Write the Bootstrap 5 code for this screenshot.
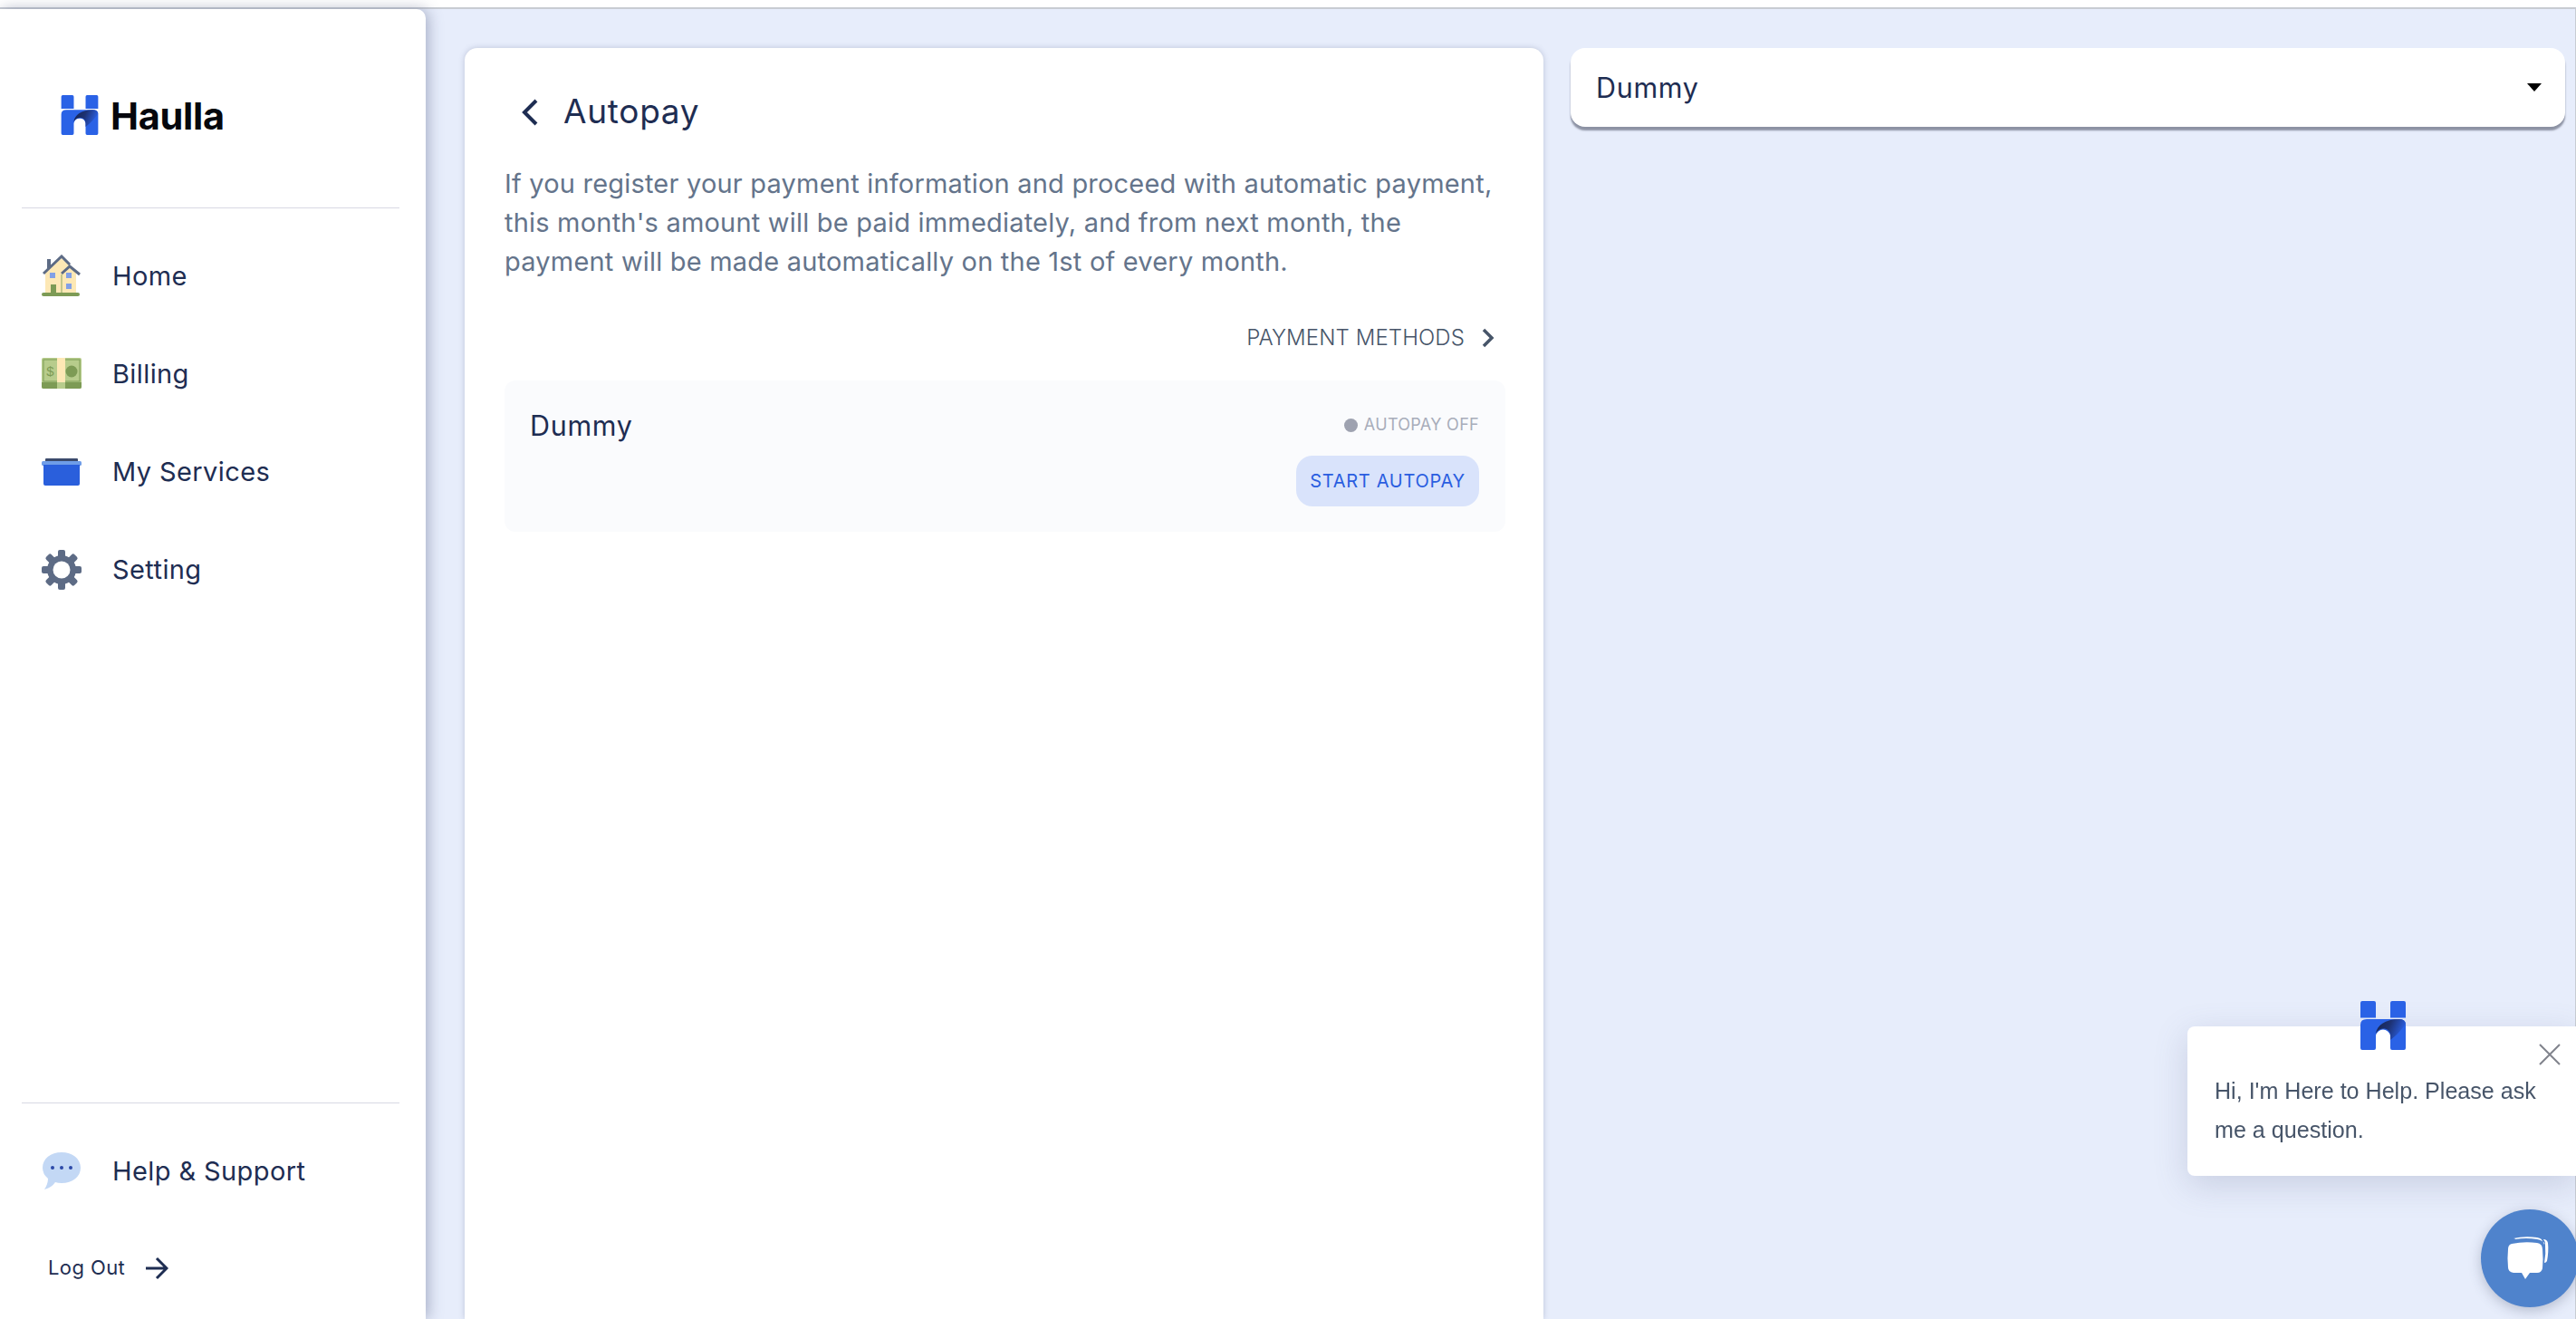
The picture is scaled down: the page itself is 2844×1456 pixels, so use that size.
<!DOCTYPE html>
<html lang="en">
<head>
<meta charset="utf-8">
<title>Haulla Autopay</title>
<link rel="stylesheet" href="https://cdn.jsdelivr.net/npm/bootstrap@5.3.0/dist/css/bootstrap.min.css">
<style>
html,body{height:100%;}
body{font-family:"Inter","Liberation Sans",sans-serif;background:#e7edfb;overflow:hidden;color:#1e2d52;}
.top-strip{height:10px;background:#fff;border-bottom:2px solid #c8ccd3;}
.app-shell{height:1446px;}
.side-pane{width:470px;background:#fff;border-top-right-radius:10px;box-shadow:3px 0 16px rgba(90,100,135,.45);padding:0 29px 0 24px;flex:none;z-index:2;}
.brand-row{height:220px;padding:95px 0 0 43px;border-bottom:1px solid #d8d9e4;flex:none;}
.brand-word{font-family:"Inter","Liberation Sans",sans-serif;font-weight:700;font-size:41.5px;line-height:46px;color:#05070d;letter-spacing:-.3px;margin-left:13px;}
.menu-list{padding-top:21px;}
.menu-item{height:108px;padding:0 0 0 22px;color:#1e2d52;font-size:29px;font-family:"Inter","Liberation Sans",sans-serif;font-weight:400;letter-spacing:.4px;gap:32px;}
.menu-item:hover,.menu-item:focus{color:#1e2d52;}
.icon-box{width:46px;flex:none;}
.side-foot{border-top:1px solid #d8d9e4;height:239px;flex:none;}
.help-item{margin-top:21px;}
.logout-item{padding:36px 0 0 29px;color:#1e2d52;font-size:22px;font-family:"Inter","Liberation Sans",sans-serif;letter-spacing:.4px;gap:22px;}
.content-area{padding:43px 11px 0 43px;gap:30px;border-right:1px solid #c8ccd3;}
.pay-card{width:1191px;flex:none;background:#fff;border:0;border-radius:14px 14px 0 0;box-shadow:0 0 6px rgba(90,100,135,.3);padding:43px 42px 0 44px;}
.title-row{height:56px;gap:27px;padding-left:18px;margin-bottom:29px;}
.page-title{font-family:"Inter","Liberation Sans",sans-serif;font-size:37px;letter-spacing:.7px;font-weight:400;color:#1e2d52;margin:0 0 3px;line-height:50px;}
.lead-text{font-size:29px;line-height:43px;color:#64748b;margin:0;letter-spacing:.2px;padding-right:2px;}
.methods-row{height:40px;margin-top:43px;padding-right:12px;gap:19px;color:#475569;font-size:24px;font-family:"Inter","Liberation Sans",sans-serif;font-weight:300;letter-spacing:.1px;}
.methods-row:hover{color:#475569;}
.account-box{margin-top:27px;height:167px;background:#fafbfd;border-radius:12px;padding:27px 29px 0 28px;}
.account-name{font-family:"Inter","Liberation Sans",sans-serif;font-weight:400;font-size:30.5px;line-height:46px;letter-spacing:.7px;color:#1e2d52;}
.status-off{font-size:18px;color:#a8adba;line-height:44px;height:44px;gap:7px;letter-spacing:.3px;}
.status-dot{width:15px;height:15px;border-radius:50%;background:#9ea2b0;}
.autopay-btn{width:202px;height:56px;margin-top:12px;padding:0;background:#d9e3fb;color:#2a5ee0;border:0;border-radius:18px;font-size:20px;letter-spacing:.7px;}
.autopay-btn:hover{background:#d9e3fb;color:#2a5ee0;}
.select-col{flex:1 1 auto;min-width:0;}
.picker-btn{width:100%;height:87px;background:#fff;border:0;border-radius:16px;box-shadow:0 4px 2px rgba(80,85,105,.6);padding:0 26px 0 28px;color:#1e2d52;font-family:"Inter","Liberation Sans",sans-serif;font-weight:400;font-size:30.5px;letter-spacing:.7px;}
.picker-btn:hover,.picker-btn:focus,.picker-btn:active{background:#fff!important;color:#1e2d52!important;}
.picker-btn::after{color:#000;border-top-width:9px;border-left-width:8px;border-right-width:8px;margin:0;}
.help-popup{position:fixed;left:2415px;top:1133px;width:429px;height:165px;background:#fff;border-radius:8px 0 0 8px;box-shadow:0 10px 36px rgba(90,100,140,.22);padding:50px 20px 0 30px;font-family:"Liberation Sans",sans-serif;font-size:25.1px;line-height:43px;color:#475569;z-index:5;}
.popup-logo{position:absolute;left:191px;top:-28px;}
.popup-close{position:absolute;left:388px;top:19px;line-height:0;}
.chat-fab{position:fixed;left:2739px;top:1335px;width:108px;height:108px;border-radius:50%;background:#4f83cc;box-shadow:0 4px 14px rgba(70,80,110,.3);z-index:5;border:0;padding:0;}
.chat-fab svg{position:absolute;left:26px;top:26px;}
</style>
</head>
<body>
<svg width="0" height="0" class="position-absolute">
  <defs>
    <linearGradient id="sw" x1="0" y1="0" x2="1" y2=".3">
      <stop offset="0" stop-color="#17224a"/><stop offset=".5" stop-color="#1d3273"/><stop offset="1" stop-color="#2a5ee0"/>
    </linearGradient>
    <symbol id="hmark" viewBox="0 0 50 54">
      <path fill="#2a62e6" d="M2 0H15Q17 0 17 2V18.500H0V2Q0 0 2 0ZM35 0H48Q50 0 50 2V18.500H33V2Q33 0 35 0Z"/>
      <path fill="#2a62e6" d="M0 26Q0 20 7 20H43Q50 20 50 26V52Q50 54 48 54H35Q33 54 33 52V38A8.200 8.200 0 0 0 17 38V52Q17 54 15 54H2Q0 54 0 52Z"/>
      <path fill="url(#sw)" d="M17 36C18 27 27 20 43 20Q49 20 50 25C47 30 40 38 33 43V38C33 29 21 28 17 36Z"/>
    </symbol>
  </defs>
</svg>
<div class="top-strip"></div>
<div class="app-shell d-flex">
  <aside class="side-pane d-flex flex-column">
    <div class="brand-row d-flex align-items-start">
      <svg width="42" height="44"><use href="#hmark"/></svg>
      <span class="brand-word">Haulla</span>
    </div>
    <nav class="menu-list nav flex-column flex-grow-1">
      <a class="menu-item nav-link d-flex align-items-center" href="#">
        <span class="icon-box d-flex">
          <svg width="44" height="48" viewBox="0 0 44 48"><path fill="#5d6b85" d="M6 5h4v10H6z"/><path fill="#fde8b5" d="M4 20 22 4l16 14v27H4z"/><path fill="none" stroke="#5d6b85" stroke-width="3" d="M2 21 22 2 31 11M22 21l9-8 11 9"/><path fill="none" stroke="#8aa663" stroke-width="1" d="M22 22v21"/><path fill="#82a0e6" d="M9 20h6v6H9zM27 20h6v6h-6zM27 32h6v6h-6z"/><path fill="#7d9b55" d="M10 33h6v10h-6z"/><rect x="0" y="42" width="42" height="4" rx="2" fill="#7d9b55"/></svg>
        </span>
        <span>Home</span>
      </a>
      <a class="menu-item nav-link d-flex align-items-center" href="#">
        <span class="icon-box d-flex">
          <svg width="44" height="36" viewBox="0 0 44 36"><rect width="44" height="34" rx="2" fill="#b7cc8c"/><path fill="#7d9b55" d="M0 27h44v5q0 2-2 2H2q-2 0-2-2z"/><rect x="2" y="2" width="40" height="24" fill="none" stroke="#7d9b55" stroke-width="1"/><rect x="17" width="9" height="27" fill="#fde8b5"/><rect x="17" y="27" width="9" height="7" fill="#b7cc8c"/><circle cx="33" cy="15" r="6.500" fill="#7d9b55"/><text x="9.500" y="20" font-size="15" font-family="Liberation Sans" fill="#7d9b55" text-anchor="middle">$</text></svg>
        </span>
        <span>Billing</span>
      </a>
      <a class="menu-item nav-link d-flex align-items-center" href="#">
        <span class="icon-box d-flex">
          <svg width="44" height="30" viewBox="0 0 44 30"><rect x="4" width="36" height="4" rx="1" fill="#3b4a6b"/><rect y="3" width="44" height="5" rx="1.500" fill="#6f9de8"/><path fill="#2a5fdc" d="M2 7h40v21q0 2-2 2H4q-2 0-2-2z"/></svg>
        </span>
        <span>My Services</span>
      </a>
      <a class="menu-item nav-link d-flex align-items-center" href="#">
        <span class="icon-box d-flex">
          <svg width="44" height="44" viewBox="0 0 44 44"><g fill="#5d6b85"><rect x="18" y="0" width="8" height="44" rx="2"/><rect x="18" y="0" width="8" height="44" rx="2" transform="rotate(45 22 22)"/><rect x="18" y="0" width="8" height="44" rx="2" transform="rotate(90 22 22)"/><rect x="18" y="0" width="8" height="44" rx="2" transform="rotate(135 22 22)"/><circle cx="22" cy="22" r="16"/></g><circle cx="22" cy="22" r="9.500" fill="#fff"/></svg>
        </span>
        <span>Setting</span>
      </a>
    </nav>
    <div class="side-foot">
      <a class="menu-item help-item nav-link d-flex align-items-center" href="#">
        <span class="icon-box d-flex">
          <svg width="44" height="42" viewBox="0 0 44 42"><path fill="#c3d8f5" d="M22 0C34 0 43 7 43 17S34 34 22 34q-4 0-7-1Q11 39 3 41 7 35 7 29 1 24 1 17C1 7 10 0 22 0Z"/><g fill="#2c4aa8"><circle cx="12" cy="17" r="2"/><circle cx="22" cy="17" r="2"/><circle cx="32" cy="17" r="2"/></g></svg>
        </span>
        <span>Help &amp; Support</span>
      </a>
      <a class="logout-item nav-link d-flex align-items-center" href="#">
        <span>Log Out</span>
        <svg width="26" height="26" viewBox="0 0 26 26" fill="none" stroke="#1e2d52" stroke-width="3"><path d="M1 13h22M13 2l11 11-11 11"/></svg>
      </a>
    </div>
  </aside>
  <main class="content-area d-flex flex-grow-1">
    <section class="pay-card card">
      <div class="title-row d-flex align-items-center">
        <svg width="20" height="30" viewBox="0 0 20 30" fill="none" stroke="#1e2d52" stroke-width="4"><path d="M17 2 4 15l13 13"/></svg>
        <h1 class="page-title">Autopay</h1>
      </div>
      <p class="lead-text">If you register your payment information and proceed with automatic payment, this month's amount will be paid immediately, and from next month, the payment will be made automatically on the 1st of every month.</p>
      <a class="methods-row d-flex align-items-center justify-content-end text-decoration-none" href="#">
        <span>PAYMENT METHODS</span>
        <svg width="14" height="22" viewBox="0 0 14 22" fill="none" stroke="#475569" stroke-width="3.500"><path d="M2 2l9 9-9 9"/></svg>
      </a>
      <div class="account-box d-flex justify-content-between">
        <div class="account-name">Dummy</div>
        <div class="d-flex flex-column align-items-end">
          <div class="status-off d-flex align-items-center"><span class="status-dot"></span><span>AUTOPAY OFF</span></div>
          <button class="autopay-btn btn" type="button">START AUTOPAY</button>
        </div>
      </div>
    </section>
    <div class="select-col">
      <div class="dropdown">
        <button class="picker-btn btn dropdown-toggle d-flex align-items-center justify-content-between" type="button" data-bs-toggle="dropdown">Dummy</button>
        <ul class="dropdown-menu w-100"><li><a class="dropdown-item" href="#">Dummy</a></li></ul>
      </div>
    </div>
  </main>
</div>
<div class="help-popup">
  <svg class="popup-logo" width="50" height="54"><use href="#hmark"/></svg>
  <span class="popup-close"><svg width="24" height="24" viewBox="0 0 24 24" fill="none" stroke="#80838c" stroke-width="2"><path d="M1 1l22 22M23 1 1 23"/></svg></span>
  Hi, I'm Here to Help. Please ask me a question.
</div>
<button class="chat-fab" type="button" aria-label="Chat">
  <svg width="56" height="56" viewBox="0 0 56 56"><path fill="#fff" d="M10 6q12-3 26-1 6 1 6 5 3 0 2 3-1-5-8-6-12-2-24 0 0-1-2-1Z M43 7q4 0 5 4 1 9-1 20-1 2-3 2 2-10 1-20 0-4-2-6Z"/><path fill="#fff" d="M8 12q14-3 28-1 6 1 6 7 1 11 0 21-1 5-6 5H28l-5 7-4-7H10q-6-1-6-6-1-11 0-20 0-5 4-6Z"/></svg>
</button>
<script src="https://cdn.jsdelivr.net/npm/bootstrap@5.3.0/dist/js/bootstrap.bundle.min.js"></script>
</body>
</html>
